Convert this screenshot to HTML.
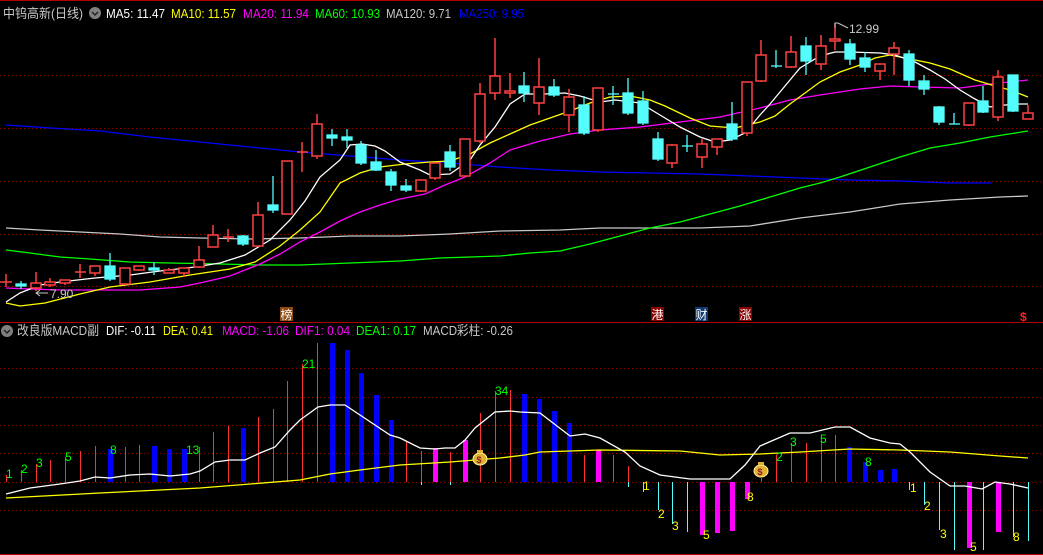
<!DOCTYPE html>
<html><head><meta charset="utf-8"><style>
html,body{margin:0;padding:0;background:#000;width:1043px;height:555px;overflow:hidden}
svg{display:block}
text{font-family:"Liberation Sans","Noto Sans CJK SC",sans-serif}
</style></head><body>
<svg width="1043" height="555" viewBox="0 0 1043 555" xmlns="http://www.w3.org/2000/svg">
<rect width="1043" height="555" fill="#000"/>
<line x1="0" y1="0.5" x2="1043" y2="0.5" stroke="#b00000"/>
<g stroke="#8a0000" stroke-dasharray="1,3">
<line x1="0" y1="75.5" x2="1043" y2="75.5"/><line x1="0" y1="128.5" x2="1043" y2="128.5"/>
<line x1="0" y1="181.5" x2="1043" y2="181.5"/><line x1="0" y1="234.5" x2="1043" y2="234.5"/>
<line x1="0" y1="286.5" x2="1043" y2="286.5"/>
<line x1="0" y1="368.5" x2="1043" y2="368.5"/><line x1="0" y1="397.5" x2="1043" y2="397.5"/>
<line x1="0" y1="425.5" x2="1043" y2="425.5"/><line x1="0" y1="453.5" x2="1043" y2="453.5"/>
<line x1="0" y1="482.5" x2="1043" y2="482.5"/><line x1="0" y1="510.5" x2="1043" y2="510.5"/>
</g>
<line x1="0" y1="322.5" x2="1043" y2="322.5" stroke="#b00000"/>
<line x1="0" y1="554.5" x2="1043" y2="554.5" stroke="#b00000"/>

<g fill="none" stroke-width="1.3">
<polyline stroke="#0000ff" points="6,125 50,128 100,131 150,137 200,142 250,147 300,152 350,156 400,160 450,163 500,167 550,170 600,172 650,173 700,174 750,176 800,178 850,180 900,181 950,183 992,183"/>
<polyline stroke="#c8c8c8" points="6,228 40,230 80,232 120,234 160,237 200,238 250,239 300,238 350,236 400,236 450,234 500,231 560,230 600,228 640,228 700,228 750,226 800,218 850,212 900,204 950,200 1000,197 1028,196"/>
<polyline stroke="#00ff00" points="6,250 30,253 60,257 90,259 130,262 170,263 220,264 260,265 300,265 350,263 400,261 440,258 470,257 500,256 530,253 560,251 590,244 620,236 650,228 680,222 710,214 740,206 770,197 800,188 820,183 840,177 870,167 900,157 930,148 960,143 990,137 1028,131"/>
<polyline stroke="#ff00ff" points="6,288 30,289 60,290 100,290 140,290 180,287 200,283 230,276 260,264 280,254 300,242 320,232 340,221 360,212 380,205 400,199 425,194 445,185 465,177 490,163 510,150 540,141 570,134 600,130 640,127 680,122 720,117 760,108 790,100 820,95 860,89 890,86 920,87 960,88 990,84 1028,80"/>
<polyline stroke="#ffff00" points="6,303 20,306 45,303 80,294 110,287 150,282 190,275 230,269 255,262 280,246 300,230 320,212 340,183 360,173 380,167 405,164 430,162 450,161 470,154 490,143 510,134 530,125 550,118 570,111 590,103 610,97 630,96 650,100 665,106 690,118 710,126 735,128 760,122 775,116 790,104 820,82 840,72 860,65 875,58 890,55 910,59 930,63 950,69 975,80 995,86 1010,90 1028,97"/>
<polyline stroke="#ffffff" points="6,302 20,293 40,285 60,282 95,278 130,275 160,271 195,267 220,263 245,255 270,240 290,220 305,201 320,177 340,160 350,145 362,144 375,146 385,151 400,162 420,170 430,175 450,174 470,160 480,145 495,127 510,104 525,94 545,94 565,93 580,96 600,102 615,100 640,103 660,115 680,127 700,137 715,142 730,140 745,133 760,115 770,104 785,86 800,68 820,56 835,52 850,52 880,53 895,55 915,62 930,70 945,79 960,90 975,99 990,107 1005,105 1020,104 1028,104"/>
</g>

<g stroke="#ff4040" stroke-width="1.5">
<line x1="6" y1="274" x2="6" y2="287"/><line x1="0" y1="282" x2="12" y2="282"/>
<line x1="36" y1="272" x2="36" y2="291"/><rect x="31" y="283" width="10" height="5" fill="#000"/>
<line x1="50" y1="278" x2="50" y2="287"/><rect x="45" y="282" width="10" height="3" fill="#000"/>
<line x1="65" y1="280" x2="65" y2="285"/><rect x="60" y="280" width="10" height="3" fill="#000"/>
<line x1="80" y1="264" x2="80" y2="278"/><line x1="75" y1="272" x2="86" y2="272"/>
<line x1="95" y1="266" x2="95" y2="276"/><rect x="90" y="266" width="10" height="7" fill="#000"/>
<line x1="125" y1="268" x2="125" y2="285"/><rect x="120" y="268" width="10" height="16" fill="#000"/>
<line x1="139" y1="266" x2="139" y2="271"/><rect x="134" y="266" width="10" height="4" fill="#000"/>
<line x1="169" y1="268" x2="169" y2="273"/><rect x="164" y="270" width="10" height="3" fill="#000"/>
<line x1="184" y1="268" x2="184" y2="277"/><rect x="179" y="268" width="10" height="5" fill="#000"/>
<line x1="199" y1="246" x2="199" y2="268"/><rect x="194" y="260" width="10" height="7" fill="#000"/>
<line x1="213" y1="225" x2="213" y2="247"/><rect x="208" y="235" width="10" height="12" fill="#000"/>
<line x1="228" y1="229" x2="228" y2="242"/><line x1="223" y1="237" x2="234" y2="237"/>
<line x1="258" y1="202" x2="258" y2="247"/><rect x="253" y="215" width="10" height="31" fill="#000"/>
<line x1="287" y1="161" x2="287" y2="214"/><rect x="282" y="161" width="10" height="53" fill="#000"/>
<line x1="302" y1="142" x2="302" y2="172"/><line x1="297" y1="152" x2="308" y2="152"/>
<line x1="317" y1="114" x2="317" y2="159"/><rect x="312" y="124" width="10" height="32" fill="#000"/>
<line x1="421" y1="180" x2="421" y2="192"/><rect x="416" y="180" width="10" height="11" fill="#000"/>
<line x1="435" y1="163" x2="435" y2="180"/><rect x="430" y="163" width="10" height="15" fill="#000"/>
<line x1="465" y1="139" x2="465" y2="176"/><rect x="460" y="139" width="10" height="37" fill="#000"/>
<line x1="480" y1="83" x2="480" y2="143"/><rect x="475" y="94" width="10" height="47" fill="#000"/>
<line x1="495" y1="38" x2="495" y2="100"/><rect x="490" y="76" width="10" height="17" fill="#000"/>
<line x1="510" y1="73" x2="510" y2="98"/><rect x="505" y="91" width="10" height="2" fill="#000"/>
<line x1="539" y1="58" x2="539" y2="115"/><rect x="534" y="87" width="10" height="16" fill="#000"/>
<line x1="569" y1="89" x2="569" y2="132"/><rect x="564" y="97" width="10" height="18" fill="#000"/>
<line x1="598" y1="88" x2="598" y2="132"/><rect x="593" y="88" width="10" height="42" fill="#000"/>
<line x1="672" y1="144" x2="672" y2="168"/><rect x="667" y="145" width="10" height="18" fill="#000"/>
<line x1="702" y1="139" x2="702" y2="168"/><rect x="697" y="144" width="10" height="13" fill="#000"/>
<line x1="717" y1="139" x2="717" y2="155"/><rect x="712" y="139" width="10" height="8" fill="#000"/>
<line x1="747" y1="82" x2="747" y2="136"/><rect x="742" y="82" width="10" height="51" fill="#000"/>
<line x1="761" y1="40" x2="761" y2="82"/><rect x="756" y="55" width="10" height="26" fill="#000"/>
<line x1="791" y1="36" x2="791" y2="68"/><rect x="786" y="52" width="10" height="15" fill="#000"/>
<line x1="821" y1="35" x2="821" y2="70"/><rect x="816" y="46" width="10" height="18" fill="#000"/>
<line x1="835" y1="23" x2="835" y2="50"/><rect x="830" y="39" width="10" height="2" fill="#000"/>
<line x1="880" y1="64" x2="880" y2="80"/><rect x="875" y="64" width="10" height="7" fill="#000"/>
<line x1="894" y1="42" x2="894" y2="75"/><rect x="889" y="48" width="10" height="6" fill="#000"/>
<line x1="969" y1="103" x2="969" y2="126"/><rect x="964" y="103" width="10" height="22" fill="#000"/>
<line x1="998" y1="70" x2="998" y2="121"/><rect x="993" y="77" width="10" height="40" fill="#000"/>
<line x1="1028" y1="105" x2="1028" y2="119"/><rect x="1023" y="113" width="10" height="6" fill="#000"/>
</g>
<g stroke="#54fcfc" fill="#54fcfc" stroke-width="1.3">
<line x1="21" y1="281" x2="21" y2="289"/><rect x="16" y="284" width="10" height="2"/>
<line x1="110" y1="253" x2="110" y2="281"/><rect x="105" y="266" width="10" height="13"/>
<line x1="154" y1="262" x2="154" y2="275"/><rect x="149" y="268" width="10" height="2"/>
<line x1="243" y1="235" x2="243" y2="246"/><rect x="238" y="236" width="10" height="8"/>
<line x1="273" y1="176" x2="273" y2="213"/><rect x="268" y="205" width="10" height="5"/>
<line x1="332" y1="129" x2="332" y2="146"/><rect x="327" y="135" width="10" height="3"/>
<line x1="347" y1="129" x2="347" y2="148"/><rect x="342" y="137" width="10" height="3"/>
<line x1="361" y1="141" x2="361" y2="165"/><rect x="356" y="145" width="10" height="18"/>
<line x1="376" y1="150" x2="376" y2="171"/><rect x="371" y="162" width="10" height="8"/>
<line x1="391" y1="169" x2="391" y2="191"/><rect x="386" y="172" width="10" height="13"/>
<line x1="406" y1="179" x2="406" y2="192"/><rect x="401" y="186" width="10" height="4"/>
<line x1="450" y1="145" x2="450" y2="171"/><rect x="445" y="152" width="10" height="15"/>
<line x1="524" y1="72" x2="524" y2="102"/><rect x="519" y="86" width="10" height="7"/>
<line x1="554" y1="79" x2="554" y2="97"/><rect x="549" y="87" width="10" height="8"/>
<line x1="584" y1="96" x2="584" y2="135"/><rect x="579" y="105" width="10" height="28"/>
<line x1="613" y1="86" x2="613" y2="105"/><line x1="608" y1="94" x2="619" y2="94"/>
<line x1="628" y1="78" x2="628" y2="115"/><rect x="623" y="93" width="10" height="20"/>
<line x1="643" y1="91" x2="643" y2="125"/><rect x="638" y="101" width="10" height="22"/>
<line x1="658" y1="132" x2="658" y2="161"/><rect x="653" y="139" width="10" height="20"/>
<line x1="687" y1="135" x2="687" y2="152"/><line x1="682" y1="146" x2="693" y2="146"/>
<line x1="732" y1="102" x2="732" y2="141"/><rect x="727" y="124" width="10" height="15"/>
<line x1="776" y1="50" x2="776" y2="68"/><line x1="771" y1="66" x2="782" y2="66"/>
<line x1="806" y1="37" x2="806" y2="75"/><rect x="801" y="46" width="10" height="15"/>
<line x1="850" y1="39" x2="850" y2="65"/><rect x="845" y="44" width="10" height="15"/>
<line x1="865" y1="52" x2="865" y2="72"/><rect x="860" y="58" width="10" height="9"/>
<line x1="909" y1="50" x2="909" y2="86"/><rect x="904" y="54" width="10" height="26"/>
<line x1="924" y1="75" x2="924" y2="95"/><rect x="919" y="81" width="10" height="8"/>
<line x1="939" y1="106" x2="939" y2="125"/><rect x="934" y="107" width="10" height="15"/>
<line x1="954" y1="113" x2="954" y2="124"/><line x1="949" y1="124" x2="960" y2="124"/>
<line x1="983" y1="86" x2="983" y2="113"/><rect x="978" y="101" width="10" height="11"/>
<line x1="1013" y1="75" x2="1013" y2="112"/><rect x="1008" y="75" width="10" height="36"/>
</g>
<g fill="#c8c8c8" font-size="12">
<text x="849" y="33">12.99</text>
<text x="50" y="298">7.90</text>
</g>
<polyline points="848,28 838,23 835,23 835,28" fill="none" stroke="#c8c8c8"/>
<line x1="36" y1="293" x2="48" y2="293" stroke="#c8c8c8"/><polyline points="40,290 36,293 40,296" fill="none" stroke="#c8c8c8"/>

<rect x="280" y="307" width="13" height="14" fill="#8b4a10"/><text x="280.5" y="319" font-size="12" fill="#fff">榜</text>
<rect x="651" y="307" width="13" height="14" fill="#8b0000"/><text x="651.5" y="319" font-size="12" fill="#fff">港</text>
<rect x="695" y="307" width="13" height="14" fill="#103a70"/><text x="695.5" y="319" font-size="12" fill="#fff">财</text>
<rect x="739" y="307" width="13" height="14" fill="#8b0000"/><text x="739.5" y="319" font-size="12" fill="#fff">涨</text>
<text x="1020" y="321" font-size="12" fill="#ff2020" font-weight="bold">$</text>

<g font-size="13">
<text x="3" y="18" fill="#c8c8c8" textLength="80" lengthAdjust="spacingAndGlyphs">中钨高新(日线)</text>
<circle cx="95" cy="13" r="6" fill="#808080"/><polyline points="92,12 95,15 98,12" fill="none" stroke="#222" stroke-width="1.5"/>
<text x="106" y="18" fill="#fff" textLength="59" lengthAdjust="spacingAndGlyphs">MA5: 11.47</text>
<text x="171" y="18" fill="#ffff00" textLength="65" lengthAdjust="spacingAndGlyphs">MA10: 11.57</text>
<text x="243" y="18" fill="#ff00ff" textLength="66" lengthAdjust="spacingAndGlyphs">MA20: 11.94</text>
<text x="315" y="18" fill="#00ff00" textLength="65" lengthAdjust="spacingAndGlyphs">MA60: 10.93</text>
<text x="386" y="18" fill="#c8c8c8" textLength="65" lengthAdjust="spacingAndGlyphs">MA120: 9.71</text>
<text x="459" y="18" fill="#0000ff" textLength="65" lengthAdjust="spacingAndGlyphs">MA250: 9.95</text>
<circle cx="7" cy="331" r="6" fill="#808080"/><polyline points="4,330 7,333 10,330" fill="none" stroke="#222" stroke-width="1.5"/>
<text x="17" y="335" fill="#c8c8c8" textLength="82" lengthAdjust="spacingAndGlyphs">改良版MACD副</text>
<text x="106" y="335" fill="#fff" textLength="50" lengthAdjust="spacingAndGlyphs">DIF: -0.11</text>
<text x="163" y="335" fill="#ffff00" textLength="50" lengthAdjust="spacingAndGlyphs">DEA: 0.41</text>
<text x="222" y="335" fill="#ff00ff" textLength="67" lengthAdjust="spacingAndGlyphs">MACD: -1.06</text>
<text x="295" y="335" fill="#ff00ff" textLength="55" lengthAdjust="spacingAndGlyphs">DIF1: 0.04</text>
<text x="356" y="335" fill="#00ff00" textLength="60" lengthAdjust="spacingAndGlyphs">DEA1: 0.17</text>
<text x="423" y="335" fill="#c8c8c8" textLength="90" lengthAdjust="spacingAndGlyphs">MACD彩柱: -0.26</text>
</g>

<g stroke="#ff3030" stroke-width="1" transform="translate(0.5,0)">
<line x1="6" y1="482" x2="6" y2="475"/><line x1="21" y1="482" x2="21" y2="470"/><line x1="36" y1="482" x2="36" y2="464"/>
<line x1="50" y1="482" x2="50" y2="460"/><line x1="65" y1="482" x2="65" y2="457"/><line x1="80" y1="482" x2="80" y2="451"/>
<line x1="95" y1="482" x2="95" y2="446"/><line x1="125" y1="482" x2="125" y2="447"/><line x1="139" y1="482" x2="139" y2="445"/>
<line x1="199" y1="482" x2="199" y2="447"/><line x1="213" y1="482" x2="213" y2="432"/><line x1="228" y1="482" x2="228" y2="426"/>
<line x1="258" y1="482" x2="258" y2="417"/><line x1="273" y1="482" x2="273" y2="409"/><line x1="287" y1="482" x2="287" y2="381"/>
<line x1="302" y1="482" x2="302" y2="364"/><line x1="317" y1="482" x2="317" y2="343"/>
<line x1="406" y1="482" x2="406" y2="442"/><line x1="421" y1="482" x2="421" y2="451"/><line x1="450" y1="482" x2="450" y2="452"/>
<line x1="480" y1="482" x2="480" y2="413"/><line x1="495" y1="482" x2="495" y2="391"/><line x1="510" y1="482" x2="510" y2="390"/>
<line x1="584" y1="482" x2="584" y2="455"/><line x1="613" y1="482" x2="613" y2="455"/><line x1="628" y1="482" x2="628" y2="466"/>
<line x1="761" y1="482" x2="761" y2="478"/><line x1="776" y1="482" x2="776" y2="455"/><line x1="791" y1="482" x2="791" y2="443"/>
<line x1="806" y1="482" x2="806" y2="443"/><line x1="821" y1="482" x2="821" y2="439"/><line x1="835" y1="482" x2="835" y2="435"/>
</g>
<g stroke="#54fcfc" stroke-width="1" transform="translate(0.5,0)">
<line x1="643" y1="482" x2="643" y2="492"/><line x1="658" y1="482" x2="658" y2="510"/><line x1="672" y1="482" x2="672" y2="524"/>
<line x1="687" y1="482" x2="687" y2="532"/><line x1="909" y1="482" x2="909" y2="490"/><line x1="924" y1="482" x2="924" y2="505"/>
<line x1="939" y1="482" x2="939" y2="530"/><line x1="954" y1="482" x2="954" y2="550"/><line x1="983" y1="482" x2="983" y2="550"/>
<line x1="1013" y1="482" x2="1013" y2="537"/><line x1="1028" y1="482" x2="1028" y2="541"/>
<line x1="421" y1="482" x2="421" y2="485"/><line x1="450" y1="482" x2="450" y2="485"/><line x1="628" y1="482" x2="628" y2="487"/>
</g>
<g fill="#0000ff">
<rect x="108" y="449" width="5" height="33"/><rect x="152" y="446" width="5" height="36"/><rect x="167" y="449" width="5" height="33"/>
<rect x="182" y="449" width="5" height="33"/><rect x="241" y="428" width="5" height="54"/><rect x="330" y="343" width="5" height="139"/>
<rect x="345" y="350" width="5" height="132"/><rect x="359" y="373" width="5" height="109"/><rect x="374" y="395" width="5" height="87"/>
<rect x="389" y="420" width="5" height="62"/><rect x="522" y="394" width="5" height="88"/><rect x="537" y="399" width="5" height="83"/>
<rect x="552" y="411" width="5" height="71"/><rect x="567" y="423" width="5" height="59"/><rect x="847" y="447" width="5" height="35"/>
<rect x="863" y="462" width="5" height="20"/><rect x="878" y="470" width="5" height="12"/><rect x="892" y="469" width="5" height="13"/>
</g>
<g fill="#ff00ff">
<rect x="433" y="448" width="5" height="34"/><rect x="463" y="440" width="5" height="42"/><rect x="596" y="450" width="5" height="32"/>
<rect x="700" y="482" width="5" height="53"/><rect x="715" y="482" width="5" height="51"/><rect x="730" y="482" width="5" height="49"/>
<rect x="745" y="482" width="5" height="17"/><rect x="967" y="482" width="5" height="66"/><rect x="996" y="482" width="5" height="50"/>
</g>
<g fill="none" stroke-width="1.3">
<polyline stroke="#ffff00" points="6,498 100,493 200,488 300,480 330,474 360,470 400,465 450,462 500,458 525,455 540,452 600,450 680,451 720,455 760,454 800,452 850,449 900,450 950,452 1000,456 1028,458"/>
<polyline stroke="#ffffff" points="6,494 30,488 60,484 80,481 95,477 110,478 130,475 150,474 170,476 190,474 200,471 215,462 230,460 245,460 260,453 275,447 290,430 300,420 318,407 330,405 345,405 360,415 375,425 390,435 400,438 420,448 435,449 445,448 455,448 465,440 475,428 495,412 510,411 520,412 540,413 570,436 585,434 600,438 625,452 640,466 660,475 690,479 730,479 745,465 760,446 790,433 810,433 835,427 850,427 870,438 890,443 900,444 910,452 930,472 950,486 965,486 982,489 995,482 1010,484 1028,488"/>
</g>
<g font-size="12" fill="#00ff00">
<text x="6" y="478">1</text><text x="21" y="473">2</text><text x="36" y="467">3</text><text x="65" y="461">5</text>
<text x="110" y="454">8</text><text x="186" y="454">13</text><text x="302" y="368">21</text><text x="495" y="395">34</text>
<text x="776" y="461">2</text><text x="790" y="446">3</text><text x="820" y="443">5</text><text x="865" y="466">8</text>
</g>
<g font-size="12" fill="#ffff00">
<text x="643" y="490">1</text><text x="658" y="518">2</text><text x="672" y="530">3</text><text x="703" y="539">5</text>
<text x="747" y="501">8</text><text x="910" y="492">1</text><text x="924" y="510">2</text><text x="940" y="538">3</text>
<text x="970" y="551">5</text><text x="1013" y="541">8</text>
</g>
<g>
<ellipse cx="480" cy="459" rx="7" ry="6" fill="#e0b030" stroke="#fff3a0"/><rect x="477" y="450" width="6" height="3" fill="#e0b030"/>
<text x="476.5" y="463" font-size="9" fill="#8b2020" font-weight="bold">$</text>
<ellipse cx="761" cy="471" rx="7" ry="6" fill="#e0b030" stroke="#fff3a0"/><rect x="758" y="462" width="6" height="3" fill="#e0b030"/>
<text x="757.5" y="475" font-size="9" fill="#8b2020" font-weight="bold">$</text>
</g>
</svg>
</body></html>
